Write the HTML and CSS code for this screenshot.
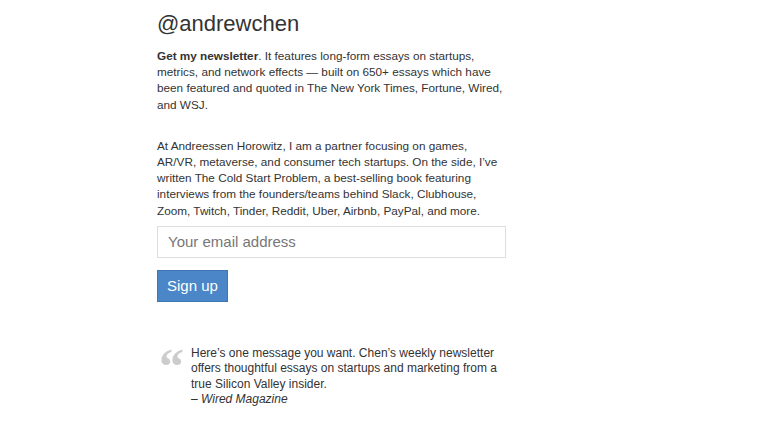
FILE: index.html
```html
<!DOCTYPE html>
<html>
<head>
<meta charset="utf-8">
<link rel="stylesheet" href="styles.css">
</head>
<body>
<main class="page">
  <h1 class="handle">@andrewchen</h1>
  <p class="intro"><strong>Get my newsletter</strong>. It features long-form essays on startups, metrics, and network effects — built on 650+ essays which have been featured and quoted in The New York Times, Fortune, Wired, and WSJ.</p>
  <p class="intro">At Andreessen Horowitz, I am a partner focusing on games, AR/VR, metaverse, and consumer tech startups. On the side, I’ve written The Cold Start Problem, a best-selling book featuring interviews from the founders/teams behind Slack, Clubhouse, Zoom, Twitch, Tinder, Reddit, Uber, Airbnb, PayPal, and more.</p>
  <form class="signup">
    <input class="email" type="email" placeholder="Your email address">
    <button class="btn" type="button">Sign up</button>
  </form>
  <blockquote class="quote">
    <span class="mark">“</span>
    <div class="quote-body">
      <p>Here’s one message you want. Chen’s weekly newsletter offers thoughtful essays on startups and marketing from a true Silicon Valley insider.</p>
      <p class="source">– Wired Magazine</p>
    </div>
  </blockquote>
</main>
</body>
</html>
```
FILE: styles.css
```css
html, body {
  margin: 0;
  padding: 0;
  background: #fff;
}
body {
  font-family: "Liberation Sans", Arial, sans-serif;
  color: #333;
}
.page {
  width: 349px;
  margin-left: 157px;
  padding-top: 9px;
}
.handle {
  margin: 0;
  font-size: 22px;
  font-weight: normal;
  line-height: 30px;
  color: #333;
}
.intro {
  margin: 9px 0 0;
  font-size: 11.75px;
  line-height: 16.2px;
}
.intro + .intro {
  margin-top: 25px;
}
.signup {
  display: flex;
  flex-direction: column;
  align-items: flex-start;
  gap: 12px;
  margin-top: 7px;
}
.email {
  box-sizing: border-box;
  width: 349px;
  height: 32px;
  margin: 0;
  padding: 0 10px;
  border: 1px solid #ddd;
  border-radius: 0;
  font-family: "Liberation Sans", Arial, sans-serif;
  font-size: 15px;
  color: #333;
  outline: none;
}
.email::placeholder {
  color: #777;
}
.btn {
  box-sizing: border-box;
  height: 32px;
  margin: 0;
  padding: 0 9px;
  border: 1px solid #3f75b1;
  border-radius: 0;
  background: #4a86c8;
  color: #fff;
  font-family: "Liberation Sans", Arial, sans-serif;
  font-size: 15px;
}
.quote {
  display: flex;
  gap: 7px;
  margin: 44px 0 0;
  padding: 0;
}
.mark {
  font-family: "Liberation Serif", "Times New Roman", serif;
  font-weight: bold;
  font-size: 50px;
  line-height: 40px;
  height: 40px;
  color: #ccc;
  margin-left: 2px;
}
.quote-body {
  font-size: 12px;
  line-height: 15.5px;
}
.quote-body p {
  margin: 0;
}
.source {
  font-style: italic;
}
```
